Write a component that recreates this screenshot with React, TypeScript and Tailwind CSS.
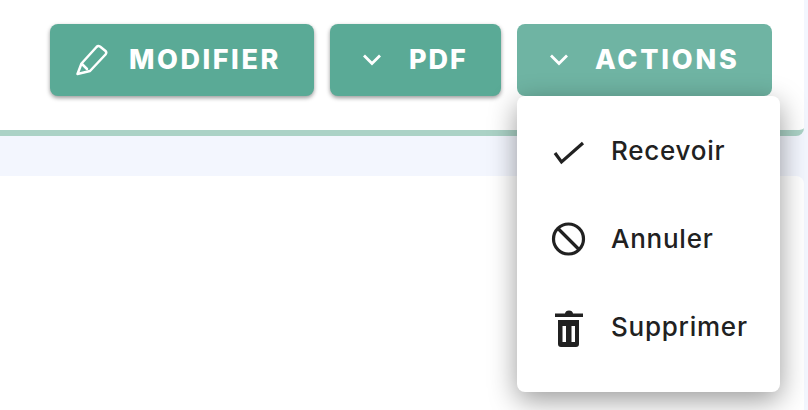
const font = "font-['Inter','Liberation_Sans',sans-serif]";

const PencilIcon = () => (
  <svg width="32" height="32" viewBox="0 0 32 32" fill="none" stroke="white" strokeWidth="2.5" strokeLinejoin="round" strokeLinecap="round">
    <path d="M1.5 30 L5.5 19.5 L20.5 3 Q22 1.5 24 2.5 L29.5 7 Q31 8.5 29.5 10.5 L14 27 Z" />
    <path d="M6 20 L11 25" />
  </svg>
);

const Chevron = () => (
  <svg width="20" height="14" viewBox="0 0 20 14" fill="none" stroke="white" strokeWidth="2.8">
    <path d="M2 2.5 L10 10.5 L18 2.5" />
  </svg>
);

const CheckIcon = () => (
  <svg width="36" height="36" viewBox="0 0 36 36" fill="none" stroke="#212121" strokeWidth="3.2">
    <path d="M5 21 L11.5 30 L33 11" />
  </svg>
);

const BanIcon = () => (
  <svg className="mt-[2px]" width="36" height="36" viewBox="0 0 36 36" fill="none" stroke="#212121" strokeWidth="3.2">
    <circle cx="18.5" cy="18" r="15" />
    <path d="M8 7.5 L29 28.5" />
  </svg>
);

const TrashIcon = () => (
  <svg className="ml-[5px] mt-[5px]" width="28" height="37" viewBox="0 0 28 37" fill="#212121">
    <path d="M0 3.5 H10 Q10.5 0.5 14 0.5 Q17.5 0.5 18 3.5 H28 V7 H0 Z" />
    <path fillRule="evenodd" d="M3 10 H24 V34 Q24 37 21 37 H6 Q3 37 3 34 Z M7.5 16 V32 H11 V16 Z M16.5 16 V32 H20 V16 Z" />
  </svg>
);

const MenuItem = ({ icon, label }: { icon: React.ReactNode; label: string }) => (
  <div className="flex h-[88px] items-center">
    <div className="flex w-[94px] justify-start pl-[33px]">{icon}</div>
    <span className="text-[26px] font-medium tracking-[0.75px] text-[#212121]">{label}</span>
  </div>
);

const Menu = () => (
  <div className="absolute left-[517px] top-[96px] flex h-[296px] w-[263px] flex-col rounded-lg bg-white py-[10px] shadow-[0_8px_28px_rgba(0,0,0,0.4)]">
    <MenuItem icon={<CheckIcon />} label="Recevoir" />
    <MenuItem icon={<BanIcon />} label="Annuler" />
    <MenuItem icon={<TrashIcon />} label="Supprimer" />
  </div>
);

const App = () => (
  <div className={`${font} relative h-[410px] w-[808px] overflow-hidden bg-[#f3f6fe]`}>
    <div className="w-[804px]">
      <header className="flex h-[136px] items-start justify-end gap-4 rounded-br-lg border-b-[6px] border-[#abd2c6] bg-white pr-[32px] pt-6">
        <button type="button" className="flex h-[72px] w-[264px] items-center gap-[21px] rounded-lg bg-[#5aaa96] pl-[26px] text-[27px] font-extrabold tracking-[2.55px] text-white shadow-[0_2px_4px_rgba(0,0,0,0.4)]">
          <PencilIcon />
          MODIFIER
        </button>
        <button type="button" className="flex h-[72px] w-[171px] items-center gap-[27px] rounded-lg bg-[#5aaa96] pl-[32px] text-[27px] font-extrabold tracking-[1.9px] text-white shadow-[0_2px_4px_rgba(0,0,0,0.4)]">
          <Chevron />
          PDF
        </button>
        <button type="button" className="flex h-[72px] w-[255px] items-center gap-[26px] rounded-lg bg-[#6fb4a3] pl-[32px] text-[27px] font-extrabold tracking-[2.8px] text-white">
          <Chevron />
          ACTIONS
        </button>
      </header>
      <div className="h-10" />
      <div className="h-[234px] rounded-tr-lg bg-white" />
    </div>
    <Menu />
  </div>
);

export default App;
